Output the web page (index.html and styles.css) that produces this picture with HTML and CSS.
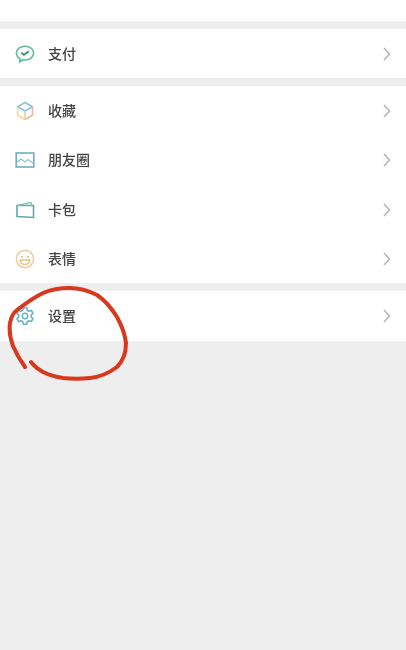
FILE: index.html
```html
<!DOCTYPE html>
<html lang="zh-CN">
<head>
    <meta charset="UTF-8">
    <meta name="viewport" content="width=device-width, initial-scale=1.0">
    <title>我</title>
    <link rel="stylesheet" href="styles.css">
</head>
<body>
    <div class="page">
        <div class="top-card"></div>

        <div class="group">
            <div class="row">
                <svg class="icon" viewBox="0 0 20 20" fill="none">
                    <path d="M10 2.200c4.800 0 8.600 3 8.600 6.900s-3.800 6.900-8.600 6.900c-.8 0-1.500-.1-2.200-.3L4.700 17.800l.3-3.100C2.800 13.400 1.400 11.400 1.400 9.100 1.400 5.200 5.200 2.200 10 2.200z" stroke="#5dbd9c" stroke-width="1.600"/>
                    <path d="M6.200 8.800l2.700 2 5-3.600" stroke="#2f9e62" stroke-width="1.800"/>
                </svg>
                <span class="label">支付</span>
                <svg class="chevron" viewBox="0 0 8 14" fill="none"><path d="M1 1l5.500 6L1 13" stroke="#b4b4b4" stroke-width="1.500"/></svg>
            </div>
        </div>

        <div class="group">
            <div class="row">
                <svg class="icon" viewBox="0 0 20 20" fill="none">
                    <path d="M10 1.500L2.500 5.800 10 10l7.500-4.200z" stroke="#8cc0dc" stroke-width="1.600" stroke-linejoin="round"/>
                    <path d="M2.500 5.800v8.400L10 18.500" stroke="#f3d9a0" stroke-width="1.600"/>
                    <path d="M10 18.500l7.500-4.300V5.800" stroke="#e9b7a8" stroke-width="1.600"/>
                    <path d="M10 10v8.500" stroke="#f1d48c" stroke-width="1.600"/>
                </svg>
                <span class="label">收藏</span>
                <svg class="chevron" viewBox="0 0 8 14" fill="none"><path d="M1 1l5.500 6L1 13" stroke="#b4b4b4" stroke-width="1.500"/></svg>
            </div>
            <div class="row">
                <svg class="icon" viewBox="0 0 20 20" fill="none">
                    <rect x="1.200" y="3" width="17.600" height="14" stroke="#71afbd" stroke-width="1.600"/>
                    <path d="M1.500 12.500l4.500-3.500 4 3 3-2.500 5.500 4" stroke="#8fc0cc" stroke-width="1.300"/>
                </svg>
                <span class="label">朋友圈</span>
                <svg class="chevron" viewBox="0 0 8 14" fill="none"><path d="M1 1l5.500 6L1 13" stroke="#b4b4b4" stroke-width="1.500"/></svg>
            </div>
            <div class="row">
                <svg class="icon" viewBox="0 0 20 20" fill="none">
                    <path d="M2 5.500h16.500v12L2 16.500z" stroke="#5fa9b3" stroke-width="1.600"/>
                    <path d="M2 5.500l14-3 1 3" stroke="#7cc8ac" stroke-width="1.400"/>
                </svg>
                <span class="label">卡包</span>
                <svg class="chevron" viewBox="0 0 8 14" fill="none"><path d="M1 1l5.500 6L1 13" stroke="#b4b4b4" stroke-width="1.500"/></svg>
            </div>
            <div class="row">
                <svg class="icon" viewBox="0 0 20 20" fill="none">
                    <circle cx="10" cy="10" r="8.600" stroke="#eccf9f" stroke-width="1.600"/>
                    <circle cx="7" cy="7.800" r="1.100" fill="#e3bd85"/>
                    <circle cx="13" cy="7.800" r="1.100" fill="#e3bd85"/>
                    <path d="M5.200 11h9.600c0 2.800-2.200 4.300-4.800 4.300S5.200 13.800 5.200 11z" stroke="#e3bd85" stroke-width="1.300"/>
                </svg>
                <span class="label">表情</span>
                <svg class="chevron" viewBox="0 0 8 14" fill="none"><path d="M1 1l5.500 6L1 13" stroke="#b4b4b4" stroke-width="1.500"/></svg>
            </div>
        </div>

        <div class="group">
            <div class="row">
                <svg class="icon" viewBox="0 0 20 20" fill="none">
                    <path d="M8.300 1.800h3.400l.5 2.400 1.800 1 2.300-.8 1.700 3-1.800 1.600v2l1.800 1.600-1.700 3-2.300-.8-1.800 1-.5 2.400H8.300l-.5-2.400-1.800-1-2.300.8-1.700-3L3.800 11V9L2 7.400l1.700-3 2.300.8 1.800-1z" stroke="#69b1d0" stroke-width="1.600" stroke-linejoin="round"/>
                    <circle cx="10" cy="10" r="2.700" stroke="#69b1d0" stroke-width="1.500"/>
                </svg>
                <span class="label">设置</span>
                <svg class="chevron" viewBox="0 0 8 14" fill="none"><path d="M1 1l5.500 6L1 13" stroke="#b4b4b4" stroke-width="1.500"/></svg>
            </div>
        </div>

        <!-- hand drawn circle on top of the screenshot -->
        <svg class="scribble" viewBox="0 0 406 650" fill="none">
            <path d="M25 367C20 360 16 353 13 346C10 338 9 330 10 323C11 317 13 313 17 310C26 303 35 297 43 293C52 289 61 288 70 288C80 288 89 291 97 295C106 301 112 309 117 317C122 326 125 335 126 343C126 352 123 361 117 367C109 373 100 377 90 378C81 379 72 379 63 378C56 377 49 375 43 372C38 369 34 366 31 362" stroke="#d8381e" stroke-width="4" stroke-linecap="round" stroke-linejoin="round"/>
        </svg>
    </div>
</body>
</html>
```

FILE: styles.css
```css
body {
    margin: 0;
    background-color: #eeeeee;
    font-family: "Noto Sans CJK SC", "Noto Sans", sans-serif;
}
.page {
    position: relative;
    width: 406px;
    height: 650px;
    overflow: hidden;
    filter: blur(0.4px);
}
.top-card {
    height: 21px;
    background: #fff;
}
.group {
    margin-top: 8px;
    background: #fff;
}
.row {
    display: flex;
    align-items: center;
    height: 49.300px;
    padding: 0 15px;
}
.icon {
    width: 20px;
    height: 20px;
    flex: none;
}
.label {
    margin-left: 13px;
    padding-bottom: 2px;
    font-size: 14px;
    font-weight: 500;
    color: #444;
}
.chevron {
    width: 8px;
    height: 14px;
    margin-left: auto;
}
.scribble {
    position: absolute;
    top: 0;
    left: 0;
    width: 406px;
    height: 650px;
}
```
